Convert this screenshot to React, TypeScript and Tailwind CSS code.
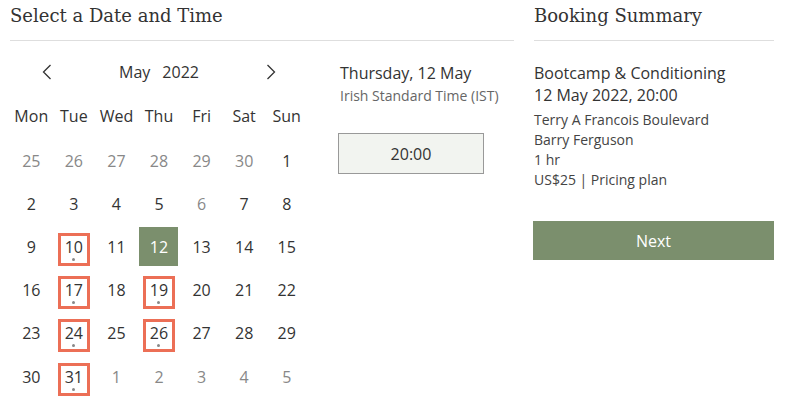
const WEEKDAYS = ["Mon", "Tue", "Wed", "Thu", "Fri", "Sat", "Sun"];

type Day = { n: number; muted?: boolean; selected?: boolean; slot?: boolean };

const WEEKS: Day[][] = [
  [{ n: 25, muted: true }, { n: 26, muted: true }, { n: 27, muted: true }, { n: 28, muted: true }, { n: 29, muted: true }, { n: 30, muted: true }, { n: 1 }],
  [{ n: 2 }, { n: 3 }, { n: 4 }, { n: 5 }, { n: 6, muted: true }, { n: 7 }, { n: 8 }],
  [{ n: 9 }, { n: 10, slot: true }, { n: 11 }, { n: 12, selected: true }, { n: 13 }, { n: 14 }, { n: 15 }],
  [{ n: 16 }, { n: 17, slot: true }, { n: 18 }, { n: 19, slot: true }, { n: 20 }, { n: 21 }, { n: 22 }],
  [{ n: 23 }, { n: 24, slot: true }, { n: 25 }, { n: 26, slot: true }, { n: 27 }, { n: 28 }, { n: 29 }],
  [{ n: 30 }, { n: 31, slot: true }, { n: 1, muted: true }, { n: 2, muted: true }, { n: 3, muted: true }, { n: 4, muted: true }, { n: 5, muted: true }],
];

const Chevron = ({ dir }: { dir: "left" | "right" }) => (
  <svg width="10" height="16" viewBox="0 0 10 16" fill="none" stroke="#333" strokeWidth="1.3">
    {dir === "left" ? <path d="M8.5 1 L1.5 8 L8.5 15" /> : <path d="M1.5 1 L8.5 8 L1.5 15" />}
  </svg>
);

const DayCell = ({ day }: { day: Day }) => {
  if (day.selected) {
    return (
      <div className="h-[43.2px] flex items-center justify-center">
        <div className="w-[39px] h-[39px] bg-[#7b8f6d] text-white flex items-center justify-center">{day.n}</div>
      </div>
    );
  }
  if (day.slot) {
    return (
      <div className="h-[43.2px] flex items-center justify-center">
        <div className="mt-[5px] w-[32px] h-[33px] border-[3px] border-[#ec6f56] flex flex-col items-center">
          <span className="leading-[20px] mt-[1px]">{day.n}</span>
          <span className="mt-[1px] w-[3px] h-[3px] rounded-full bg-[#888]" />
        </div>
      </div>
    );
  }
  return (
    <div className={`h-[43.2px] flex items-center justify-center ${day.muted ? "text-[#888]" : ""}`}>{day.n}</div>
  );
};

const App = () => {
  return (
    <div className="w-[786px] h-[401px] bg-white text-[#333] font-['Open_Sans',sans-serif] flex px-[10px] gap-[20px] overflow-hidden">
      <section className="w-[504px] flex flex-col">
        <h1 className="h-[41px] border-b border-[#dedede] font-['DejaVu_Serif',serif] text-[18px] leading-[32px]">
          Select a Date and Time
        </h1>
        <div className="flex gap-[30px]">
          <div className="w-[298px] text-[16px]">
            <div className="mt-[18px] h-[26px] flex items-center justify-between px-[32px]">
              <Chevron dir="left" />
              <div className="flex gap-[12px]">
                <span>May</span>
                <span>2022</span>
              </div>
              <Chevron dir="right" />
            </div>
            <div className="mt-[9px] grid grid-cols-7 h-[45px] items-start">
              {WEEKDAYS.map((d) => (
                <div key={d} className="h-[44px] flex items-center justify-center">{d}</div>
              ))}
            </div>
            {WEEKS.map((week, i) => (
              <div key={i} className="grid grid-cols-7">
                {week.map((day, j) => (
                  <DayCell key={j} day={day} />
                ))}
              </div>
            ))}
          </div>
          <div className="w-[146px] pt-[21px]">
            <div className="text-[16px] leading-[22px] pl-[2px]">Thursday, 12 May</div>
            <div className="mt-[2px] pl-[2px] text-[14px] leading-[20px] text-[#666] whitespace-nowrap">Irish Standard Time (IST)</div>
            <button className="mt-[27px] w-[146px] h-[41px] bg-[#f2f4f0] border border-[#999] text-[16px] text-[#333]">
              20:00
            </button>
          </div>
        </div>
      </section>
      <aside className="w-[240px] flex flex-col">
        <h2 className="h-[41px] border-b border-[#dedede] font-['DejaVu_Serif',serif] text-[18px] leading-[32px]">
          Booking Summary
        </h2>
        <div className="mt-[21px] text-[16px] leading-[22px]">
          <div>Bootcamp &amp; Conditioning</div>
          <div>12 May 2022, 20:00</div>
        </div>
        <div className="mt-[4px] text-[14px] leading-[20px] text-[#444]">
          <div>Terry A Francois Boulevard</div>
          <div>Barry Ferguson</div>
          <div>1 hr</div>
          <div>US$25 | Pricing plan</div>
        </div>
        <button className="mt-[31px] w-[241px] -ml-[1px] h-[39px] bg-[#7b8f6d] text-white text-[16px]">Next</button>
      </aside>
    </div>
  );
};

export default App;
